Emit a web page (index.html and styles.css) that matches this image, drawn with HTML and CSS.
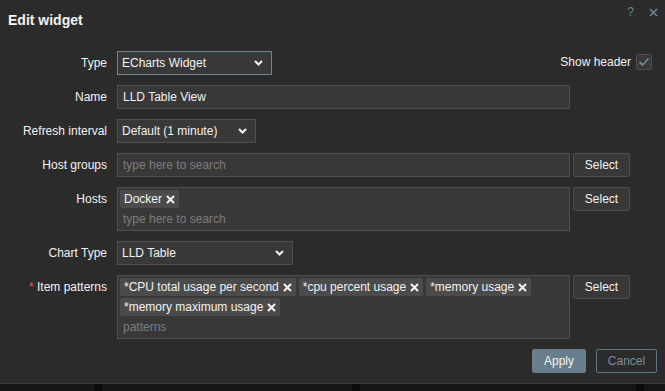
FILE: index.html
```html
<!DOCTYPE html>
<html>
<head>
<meta charset="utf-8">
<link rel="stylesheet" href="styles.css">
</head>
<body>
<div class="dialog">
  <div class="header">
    <h4 class="title">Edit widget</h4>
    <div class="header-icons">
      <span class="help">?</span>
      <svg class="close" width="9" height="9" viewBox="0 0 9 9"><path d="M1 1L8 8M8 1L1 8" stroke="#6e8694" stroke-width="1.6" fill="none"/></svg>
    </div>
  </div>
  <div class="form">
    <div class="row">
      <label class="label">Type</label>
      <div class="select select-focus w-type"><span>ECharts Widget</span><svg class="chev" width="9" height="6" viewBox="0 0 9 6"><path d="M1 1L4.5 4.5L8 1" stroke="#f2f2f2" stroke-width="2" fill="none"/></svg></div>
      <div class="show-header">
        <span>Show header</span>
        <span class="checkbox"><svg width="12" height="10" viewBox="0 0 12 10"><path d="M1.5 5L4.5 8L10.5 1.5" stroke="#6e8694" stroke-width="1.8" fill="none"/></svg></span>
      </div>
    </div>
    <div class="row">
      <label class="label">Name</label>
      <div class="input w-wide">LLD Table View</div>
    </div>
    <div class="row">
      <label class="label">Refresh interval</label>
      <div class="select w-refresh"><span>Default (1 minute)</span><svg class="chev" width="9" height="6" viewBox="0 0 9 6"><path d="M1 1L4.5 4.5L8 1" stroke="#f2f2f2" stroke-width="2" fill="none"/></svg></div>
    </div>
    <div class="row">
      <label class="label">Host groups</label>
      <div class="input w-wide placeholder">type here to search</div>
      <button class="btn-select">Select</button>
    </div>
    <div class="row">
      <label class="label">Hosts</label>
      <div class="multi w-wide">
        <div class="chips">
          <span class="chip">Docker<svg class="x" width="9" height="9" viewBox="0 0 9 9"><path d="M1 1L8 8M8 1L1 8" stroke="#f2f2f2" stroke-width="2.1" fill="none"/></svg></span>
        </div>
        <div class="ms-input">type here to search</div>
      </div>
      <button class="btn-select">Select</button>
    </div>
    <div class="row">
      <label class="label">Chart Type</label>
      <div class="select w-chart"><span>LLD Table</span><svg class="chev" width="9" height="6" viewBox="0 0 9 6"><path d="M1 1L4.5 4.5L8 1" stroke="#f2f2f2" stroke-width="2" fill="none"/></svg></div>
    </div>
    <div class="row">
      <label class="label"><span class="req">*</span> Item patterns</label>
      <div class="multi w-wide">
        <div class="chips">
          <span class="chip">*CPU total usage per second<svg class="x" width="9" height="9" viewBox="0 0 9 9"><path d="M1 1L8 8M8 1L1 8" stroke="#f2f2f2" stroke-width="2.1" fill="none"/></svg></span>
          <span class="chip">*cpu percent usage<svg class="x" width="9" height="9" viewBox="0 0 9 9"><path d="M1 1L8 8M8 1L1 8" stroke="#f2f2f2" stroke-width="2.1" fill="none"/></svg></span>
          <span class="chip">*memory usage<svg class="x" width="9" height="9" viewBox="0 0 9 9"><path d="M1 1L8 8M8 1L1 8" stroke="#f2f2f2" stroke-width="2.1" fill="none"/></svg></span>
          <span class="chip">*memory maximum usage<svg class="x" width="9" height="9" viewBox="0 0 9 9"><path d="M1 1L8 8M8 1L1 8" stroke="#f2f2f2" stroke-width="2.1" fill="none"/></svg></span>
        </div>
        <div class="ms-input">patterns</div>
      </div>
      <button class="btn-select">Select</button>
    </div>
  </div>
  <div class="footer">
    <button class="btn-apply">Apply</button>
    <button class="btn-cancel">Cancel</button>
  </div>
</div>
<div class="strip">
  <div class="cell c1"></div><div class="gap"></div>
  <div class="cell c2"></div><div class="gap"></div>
  <div class="cell c3"></div><div class="gap"></div>
  <div class="cell c4"></div>
</div>
</body>
</html>
```
FILE: styles.css
```css
* { box-sizing: border-box; }
html, body {
  margin: 0;
  padding: 0;
}
body {
  width: 665px;
  height: 391px;
  overflow: hidden;
  background: #161616;
  font-family: "Liberation Sans", Arial, sans-serif;
  font-size: 12px;
  color: #f2f2f2;
}
.dialog {
  height: 384px;
  background: #2b2b2b;
  border-bottom: 1px solid #3a3a3a;
  display: flex;
  flex-direction: column;
}
.header {
  height: 40px;
  display: flex;
  align-items: flex-start;
  padding: 0 7px 0 8px;
}
.title {
  margin: 0;
  font-size: 14px;
  font-weight: bold;
  line-height: 40px;
  color: #f2f2f2;
}
.header-icons {
  margin-left: auto;
  margin-top: 7px;
  display: flex;
  align-items: center;
  gap: 15px;
  height: 11px;
}
.help {
  color: #6e8694;
  font-size: 12px;
  line-height: 11px;
}
.form {
  padding-top: 11px;
  display: flex;
  flex-direction: column;
  gap: 10px;
}
.row {
  display: flex;
  align-items: flex-start;
}
.label {
  width: 117px;
  flex: none;
  padding-right: 10px;
  text-align: right;
  line-height: 24px;
  color: #f2f2f2;
}
.req { color: #e45959; }
.input, .select {
  height: 24px;
  background: #383838;
  border: 1px solid #4f4f4f;
  line-height: 22px;
  padding: 0 5px;
  color: #f2f2f2;
}
.placeholder { color: #7d7d7d; }
.select {
  display: flex;
  align-items: center;
  justify-content: space-between;
  padding: 0 8px 0 4px;
}
.select-focus { border-color: #6e8694; }
.w-type { width: 155px; }
.w-refresh { width: 139px; }
.w-chart { width: 176px; }
.w-wide { width: 453px; }
.show-header {
  margin-left: auto;
  margin-right: 13px;
  margin-top: 3px;
  display: flex;
  align-items: center;
  gap: 5px;
  height: 16px;
}
.checkbox {
  width: 16px;
  height: 16px;
  border: 1px solid #4f4f4f;
  background: #383838;
  border-radius: 2px;
  display: flex;
  align-items: center;
  justify-content: center;
}
.btn-select {
  margin-left: 3px;
  width: 57px;
  height: 24px;
  background: #383838;
  border: 1px solid #4f4f4f;
  border-radius: 2px;
  color: #f2f2f2;
  font-family: inherit;
  font-size: 12px;
  padding: 0;
}
.multi {
  background: #383838;
  border: 1px solid #4f4f4f;
  padding: 1px 2px 0 2px;
}
.chips {
  display: flex;
  flex-wrap: wrap;
  gap: 2px 3px;
  padding-top: 1px;
}
.chip {
  display: inline-flex;
  align-items: center;
  gap: 4px;
  height: 18px;
  padding: 0 4px;
  background: #4b4b4b;
  border-radius: 2px;
  color: #f2f2f2;
  white-space: nowrap;
}
.ms-input {
  height: 22px;
  line-height: 22px;
  padding-left: 3px;
  color: #7d7d7d;
}
.footer {
  margin-top: 10px;
  display: flex;
  justify-content: flex-end;
  gap: 10px;
  padding-right: 8px;
}
.btn-apply, .btn-cancel {
  height: 24px;
  font-family: inherit;
  font-size: 12px;
  border-radius: 2px;
  padding: 0;
}
.btn-apply {
  width: 54px;
  background: #687e8b;
  border: 1px solid #687e8b;
  color: #f2f2f2;
}
.btn-cancel {
  width: 61px;
  background: transparent;
  border: 1px solid #5e7683;
  color: #7f8e97;
}
.strip {
  display: flex;
  height: 7px;
}
.cell { background: #161616; }
.gap { width: 8px; background: #0b0b0b; }
.c1 { width: 94px; }
.c2 { width: 250px; }
.c3 { width: 276px; }
.c4 { flex: 1; }
```
